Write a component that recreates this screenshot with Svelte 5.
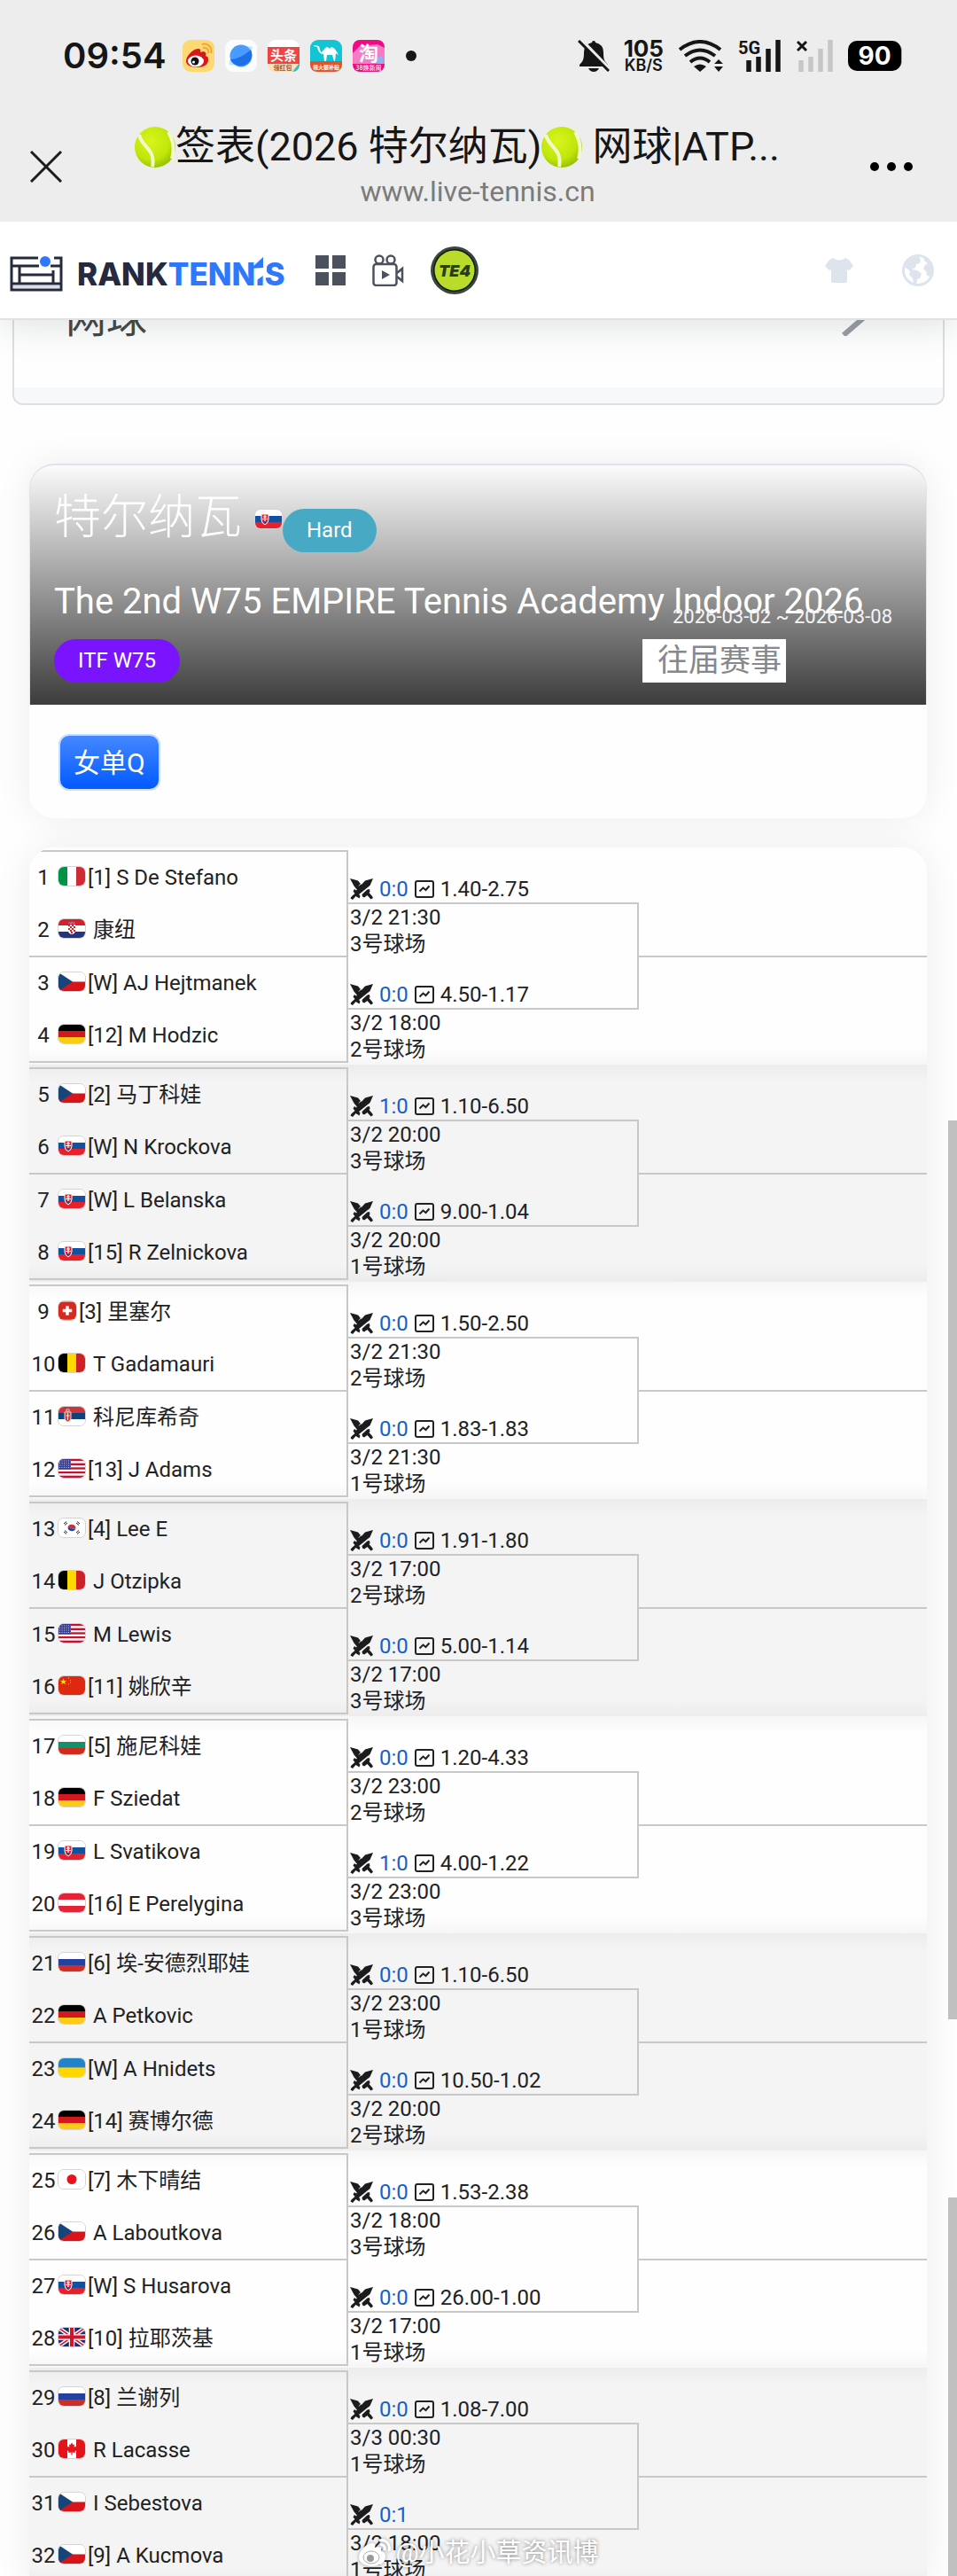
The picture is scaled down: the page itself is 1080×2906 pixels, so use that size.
<script lang="ts">
  type Player = [flag: string, name: string, seed?: string];
  type Match = {
    players: [Player, Player];
    h2h: string;
    odds?: string;
    time: string;
    court: string;
  };

  const draw: Match[] = [
    { players: [['it', 'S De Stefano', '1'], ['hr', '康纽']], h2h: '0:0', odds: '1.40-2.75', time: '3/2 21:30', court: '3号球场' },
    { players: [['cz', 'AJ Hejtmanek', 'W'], ['de', 'M Hodzic', '12']], h2h: '0:0', odds: '4.50-1.17', time: '3/2 18:00', court: '2号球场' },
    { players: [['cz', '马丁科娃', '2'], ['sk', 'N Krockova', 'W']], h2h: '1:0', odds: '1.10-6.50', time: '3/2 20:00', court: '3号球场' },
    { players: [['sk', 'L Belanska', 'W'], ['sk', 'R Zelnickova', '15']], h2h: '0:0', odds: '9.00-1.04', time: '3/2 20:00', court: '1号球场' },
    { players: [['ch', '里塞尔', '3'], ['be', 'T Gadamauri']], h2h: '0:0', odds: '1.50-2.50', time: '3/2 21:30', court: '2号球场' },
    { players: [['rs', '科尼库希奇'], ['us', 'J Adams', '13']], h2h: '0:0', odds: '1.83-1.83', time: '3/2 21:30', court: '1号球场' },
    { players: [['kr', 'Lee E', '4'], ['be', 'J Otzipka']], h2h: '0:0', odds: '1.91-1.80', time: '3/2 17:00', court: '2号球场' },
    { players: [['us', 'M Lewis'], ['cn', '姚欣辛', '11']], h2h: '0:0', odds: '5.00-1.14', time: '3/2 17:00', court: '3号球场' },
    { players: [['bg', '施尼科娃', '5'], ['de', 'F Sziedat']], h2h: '0:0', odds: '1.20-4.33', time: '3/2 23:00', court: '2号球场' },
    { players: [['sk', 'L Svatikova'], ['at', 'E Perelygina', '16']], h2h: '1:0', odds: '4.00-1.22', time: '3/2 23:00', court: '3号球场' },
    { players: [['ru', '埃-安德烈耶娃', '6'], ['de', 'A Petkovic']], h2h: '0:0', odds: '1.10-6.50', time: '3/2 23:00', court: '1号球场' },
    { players: [['ua', 'A Hnidets', 'W'], ['de', '赛博尔德', '14']], h2h: '0:0', odds: '10.50-1.02', time: '3/2 20:00', court: '2号球场' },
    { players: [['jp', '木下晴结', '7'], ['cz', 'A Laboutkova']], h2h: '0:0', odds: '1.53-2.38', time: '3/2 18:00', court: '3号球场' },
    { players: [['sk', 'S Husarova', 'W'], ['gb', '拉耶茨基', '10']], h2h: '0:0', odds: '26.00-1.00', time: '3/2 17:00', court: '1号球场' },
    { players: [['ru', '兰谢列', '8'], ['ca', 'R Lacasse']], h2h: '0:0', odds: '1.08-7.00', time: '3/3 00:30', court: '1号球场' },
    { players: [['cz', 'I Sebestova'], ['cz', 'A Kucmova', '9']], h2h: '0:1', time: '3/2 18:00', court: '1号球场' },
  ];

  // two matches feed one second round slot
  const blocks = Array.from({ length: draw.length / 2 }, (_, i) => draw.slice(i * 2, i * 2 + 2));

  const hStripes: Record<string, string[]> = {
    hr: ['#d3202c', '#fff', '#23357e'],
    cz: ['#fff', '#d7141a'],
    de: ['#000', '#d4181c', '#fccb16'],
    sk: ['#fff', '#12519f', '#e8202c'],
    rs: ['#c6363c', '#12407a', '#fff'],
    bg: ['#fff', '#12926c', '#cf2b1f'],
    at: ['#e52336', '#fff', '#e52336'],
    ru: ['#fff', '#2341a0', '#cf2e26'],
    ua: ['#2382c8', '#ffd600'],
    ch: ['#d52b1e'],
    cn: ['#de2910'],
    jp: ['#fff'],
    kr: ['#fff'],
    gb: ['#1f2d6e'],
    us: ['#c8102e', '#fff', '#c8102e', '#fff', '#c8102e', '#fff', '#c8102e', '#fff', '#c8102e'],
  };
  const vStripes: Record<string, string[]> = {
    it: ['#009246', '#fff', '#ce2b37'],
    be: ['#000', '#fdd900', '#cf2027'],
    ca: ['#e3151b', '#fff', '#e3151b'],
  };
</script>

{#snippet ball()}
  <svg class="ball" viewBox="0 0 46 46" role="img" aria-label="tennis ball">
    <defs>
      <radialGradient id="ball-fill" cx="40%" cy="35%" r="65%">
        <stop offset="0" stop-color="#d8f51c" />
        <stop offset="0.7" stop-color="#c0e60a" />
        <stop offset="1" stop-color="#9cc400" />
      </radialGradient>
    </defs>
    <circle cx="23" cy="23" r="23" fill="url(#ball-fill)" />
    <path d="M5 9c3 14 19 16 15 36M38 6c6 10 7 20 4 30" fill="none" stroke="#f2f8cc" stroke-width="4" />
  </svg>
{/snippet}

{#snippet flag(code: string)}
  <svg class="flag" class:square={code === 'ch'} viewBox={code === 'ch' ? '0 0 21 21' : '0 0 30 21'} aria-hidden="true">
    {#if hStripes[code]}
      {@const rows = hStripes[code]}
      {#each rows as color, i}
        <rect y={(i * 21) / rows.length} width="30" height={21 / rows.length + 0.3} fill={color} />
      {/each}
    {:else}
      {#each vStripes[code] as color, i}
        <rect x={i * 10} width="10.3" height="21" fill={color} />
      {/each}
    {/if}
    {#if code === 'cz'}
      <path d="M0 0l16 10.5L0 21z" fill="#17457a" />
    {:else if code === 'sk'}
      <path d="M7 5h8v6q0 4-4 6-4-2-4-6z" fill="#e0202c" stroke="#fff" />
      <path d="M11 6v7M9 8h4M8 10.500h6" stroke="#fff" stroke-width="1.200" />
      <path d="M9 14q2-2 4 0l-2 2z" fill="#12519f" />
    {:else if code === 'hr'}
      <path d="M11 6h8v7q0 3-4 4-4-1-4-4z" fill="#fff" />
      <path d="M11 6h2v2h-2zM15 6h2v2h-2zM13 8h2v2h-2zM17 8h2v2h-2zM11 10h2v2h-2zM15 10h2v2h-2zM13 12h2v2h-2zM17 12h2v2h-2zM14 14h2v2h-2z" fill="#d3202c" />
      <path d="M11 5l1-2 2 1 1-2 1 2 2-1 1 2z" fill="#6c8fc4" />
    {:else if code === 'rs'}
      <path d="M7 6h7v7q0 3-3.500 4Q7 16 7 13z" fill="#d33c3f" stroke="#f1dcd4" />
      <path d="M10.500 7v8M8.500 10h4M9 3h3v2H9z" stroke="#f3e2cc" />
    {:else if code === 'us'}
      <rect width="14" height="11.500" fill="#3a3f93" />
      <path d="M1 2h13M1 4.500h13M1 7h13M1 9.500h13" stroke="#c9cbe6" stroke-dasharray="1 1.500" />
    {:else if code === 'ch'}
      <path d="M10.500 5v11M5 10.500h11" stroke="#fff" stroke-width="3.600" />
    {:else if code === 'cn'}
      <path d="M5.500 2.500l1 2.500h2.500l-2 1.600.8 2.600-2.300-1.600-2.300 1.600.8-2.600-2-1.600h2.500z" fill="#ffde00" />
      <path d="M11 2h1M13 4.500h1M13 7h1M11 9h1" stroke="#ffde00" />
    {:else if code === 'jp'}
      <circle cx="15" cy="10.500" r="5.500" fill="#e8141c" />
    {:else if code === 'kr'}
      <path d="M10.500 10a4.600 4.600 0 0 1 9 1q-2.300 1.500-4.500 0t-4.500-1z" fill="#cd2e3a" />
      <path d="M10.500 10a4.600 4.600 0 0 0 9 1q-2.300 1.500-4.500 0t-4.500-1z" fill="#1f4aa0" />
      <path d="M6 6l3-2.500M7 7.500L10 5M21 3.500L24 6M20 5l3 2.500M6 15l3 2.500M7 13.500L10 16M21 17.500l3-2.500M20 16l3-2.500" stroke="#222" />
    {:else if code === 'gb'}
      <path d="M0 0l30 21M30 0L0 21" stroke="#fff" stroke-width="4.500" />
      <path d="M0 0l30 21M30 0L0 21" stroke="#d0142c" stroke-width="1.500" />
      <path d="M15 0v21M0 10.500h30" stroke="#fff" stroke-width="6.500" />
      <path d="M15 0v21M0 10.500h30" stroke="#d0142c" stroke-width="4" />
    {:else if code === 'ca'}
      <path d="M15 3.500l1.500 2.500 1.500-.6-.4 3.600 1.600-1.600.5 1 1.800-.3-.8 2.200 1 .7-3.200 2.500.3 1.400-3.200-.4v3h-1.200v-3l-3.200.4.3-1.400-3.200-2.500 1-.7-.8-2.200 1.800.3.500-1L12.400 9 12 5.400l1.500.6z" fill="#e3151b" />
    {/if}
  </svg>
{/snippet}

{#snippet score(match: Match)}
  <div class="score">
    <svg class="swords" viewBox="0 0 26 24" aria-hidden="true">
      <path d="M0 0l9 2.500 7.500 9-5.500 5L4.500 8.500z" fill="#1c1c1e" />
      <path d="M26 0l-9 2.500L7 13.500 5 12l-1.500 2.500 2 2.500-4 3.500-1 2 2.500 1.500 3.500-4 4 2.500 1-3-1.500-1.500L22.500 8z" fill="#1c1c1e" />
      <path d="M13.500 18l6-5.500 2.500-.5.500 3-1 1 3.500 4 1 2-2.500 1.500-4-4.500-3.500 2.500-2-1z" fill="#1c1c1e" />
      <path d="M12.500 18.500L20 10.500M10 8.500l2.500-3" stroke="#e8e8e8" stroke-width="0.900" />
    </svg>
    <a href="#h2h">{match.h2h}</a>
    {#if match.odds}
      <svg class="chart" viewBox="0 0 22 20" aria-hidden="true">
        <rect x="1" y="1" width="20" height="18" rx="2" fill="none" stroke="#222" stroke-width="2" />
        <path d="M5.500 12.500l4-4 3 2.500 4-4.500" fill="none" stroke="#222" stroke-width="2" />
      </svg>
      <span>{match.odds}</span>
    {/if}
  </div>
{/snippet}

{#snippet schedule(match: Match)}
  <div class="schedule">{match.time}<br />{match.court}</div>
{/snippet}

<div class="screen">
  <header class="top">
    <div class="status">
      <span class="clock">09:54</span>
      <div class="apps">
        <svg viewBox="0 0 36 36" aria-hidden="true">
          <rect width="36" height="36" rx="9" fill="#fdd873" />
          <path d="M4 24c0-6 8-14 14-14 2 0 3 2 2 4 4-2 8 0 6 4 3 1 3 2 3 5 0 5-6 8-12 8S4 29 4 24z" fill="#d9161d" />
          <ellipse cx="15" cy="24" rx="9" ry="6.500" fill="#fff" />
          <circle cx="14" cy="24" r="4.500" fill="#111" />
          <circle cx="12.500" cy="25" r="1.500" fill="#fff" />
          <path d="M23 9c4-1 7 2 6 6M22 5c7-2 12 4 10 10" fill="none" stroke="#f2a534" stroke-width="2" />
        </svg>
        <svg viewBox="0 0 36 36" aria-hidden="true">
          <rect width="36" height="36" rx="9" fill="#fbfcfd" />
          <path d="M5 28C2 20 22 4 31 8c-2 9-16 23-26 20z" fill="#bfe0ff" />
          <circle cx="18" cy="18" r="12.500" fill="#4a9bff" />
          <path d="M6 22C14 22 24 16 29 11a12.500 12.500 0 0 1-23 11z" fill="#1f6fe8" />
        </svg>
        <svg viewBox="0 0 36 36" aria-hidden="true">
          <rect width="36" height="36" rx="9" fill="#fff" />
          <rect y="8" width="36" height="19" fill="#ee4444" />
          <path d="M0 27h36q0 9-9 9H9q-9 0-9-9z" fill="#fbe0b4" />
          <path d="M36 26v3q-1 7-8 7z" fill="#39b9c4" />
          <text x="18" y="23" class="icon-cjk" font-size="15" fill="#fff">头条</text>
          <text x="17" y="34" class="icon-cjk" font-size="7" fill="#a0522d">领红包</text>
        </svg>
        <svg viewBox="0 0 36 36" aria-hidden="true">
          <rect width="36" height="36" rx="9" fill="#12c4d4" />
          <path d="M0 24h36v3q0 9-9 9H9q-9 0-9-9z" fill="#e8502a" />
          <path d="M4 6l6 1 2 7c3-1 4-5 7-6 3 1 3 3 5 0 4 1 6 5 8 9l-3-2-1 9h-1l-2-7h-6l-1 7h-2l-1-8c-4 0-6-3-7-8l-4-1z" fill="#fff" />
          <text x="18" y="33" class="icon-cjk" font-size="6" fill="#fff">领大额补贴</text>
        </svg>
        <svg viewBox="0 0 36 36" aria-hidden="true">
          <rect width="36" height="36" rx="9" fill="#f57cc4" />
          <path d="M0 9q0-9 9-9h18q9 0 9 9l-8-4-20 2-8 8z" fill="#ef0a86" />
          <path d="M0 27h36q0 9-9 9H9q-9 0-9-9z" fill="#e0107c" />
          <circle cx="31" cy="23" r="4" fill="#8ab4f0" />
          <text x="18" y="23" class="icon-cjk" font-size="22" fill="#fff">淘</text>
          <text x="18" y="34" class="icon-cjk" font-size="7" fill="#ffd0e8">38焕新周</text>
        </svg>
      </div>
      <span class="more-dot"></span>
      <div class="signals">
        <svg class="bell" viewBox="0 0 36 36" aria-hidden="true">
          <path d="M18 1q2 0 2 2 9 2 9 11c0 8 1 10 5 14v2H2v-2c4-4 5-6 5-14Q7 5 16 3q0-2 2-2z" fill="#161616" />
          <path d="M12 32h12q-2 4-6 4t-6-4z" fill="#161616" />
          <path d="M4 0l32 33" stroke="#ededed" stroke-width="4" />
          <path d="M1 1l34 34" stroke="#161616" stroke-width="3" />
        </svg>
        <div class="speed"><b>105</b><span>KB/S</span></div>
        <svg class="wifi" viewBox="0 0 52 36" aria-hidden="true">
          <path d="M2 11q23-18 46 0M8 18q17-13 34 0M14 25q11-9 22 0" fill="none" stroke="#161616" stroke-width="4" />
          <path d="M18 30q7-5 14 0l-7 6z" fill="#161616" />
          <path d="M41 27l5-5 5 5zM41 30h10l-5 6z" fill="#161616" />
        </svg>
        <svg class="bars" viewBox="0 0 50 36" aria-hidden="true">
          <text x="0" y="16" class="icon-latin" font-size="20" fill="#161616">5G</text>
          <path d="M12 23v13M23 19v17M34 10v26M45 0v36" stroke="#161616" stroke-width="5.500" />
        </svg>
        <svg class="bars small" viewBox="0 0 42 36" aria-hidden="true">
          <path d="M1 2l10 10M11 2L1 12" stroke="#161616" stroke-width="3" />
          <path d="M5 23v13M16 19v17M27 10v26M38 0v36" stroke="#c6c6c6" stroke-width="5.500" />
        </svg>
        <span class="battery">90</span>
      </div>
    </div>

    <div class="titlebar">
      <button class="icon-btn" aria-label="Close">
        <svg width="36" height="36" viewBox="0 0 36 36" aria-hidden="true">
          <path d="M1 1l34 34M35 1L1 35" stroke="#1c1c1c" stroke-width="3" />
        </svg>
      </button>
      <div class="titles">
        <h1>{@render ball()}签表(2026 特尔纳瓦){@render ball()} 网球|ATP...</h1>
        <p>www.live-tennis.cn</p>
      </div>
      <button class="icon-btn" aria-label="More">
        <svg width="48" height="36" viewBox="0 0 48 36" aria-hidden="true">
          <circle cx="5" cy="18" r="5" /><circle cx="24" cy="18" r="5" /><circle cx="43" cy="18" r="5" />
        </svg>
      </button>
    </div>
  </header>

  <nav class="nav">
    <a class="brand" href="#home">
      <svg width="60" height="40" viewBox="0 0 60 40" aria-hidden="true">
        <g fill="none" stroke="#262a3f" stroke-width="3">
          <path d="M32 2H2v36h56V2h-8M2 11h31M11 11v20M49 16v15M11 21h38M2 31h56M46 11h12" />
        </g>
        <path d="M4 34.500h52" stroke="#dcdfe6" stroke-width="3" />
        <circle cx="40" cy="6" r="6" fill="#2f78fb" />
      </svg>
      <span class="wordmark">RANK<em>TENN<span class="net">I<svg viewBox="0 0 18 40" aria-hidden="true"><path d="M4 5h14v13L4 28z" fill="#fff" /><path d="M0 13L14 0v12z" fill="#2f78fb" /></svg></span>S</em></span>
    </a>
    <a class="nav-grid" href="#menu" aria-label="Menu">
      <svg width="34" height="34" viewBox="0 0 34 34" aria-hidden="true">
        <path d="M0 0h15v15H0zM19 0h15v15H19zM0 19h15v15H0zM19 19h15v15H19z" fill="#4b525d" />
      </svg>
    </a>
    <a class="nav-video" href="#video" aria-label="Video">
      <svg width="36" height="36" viewBox="0 0 36 36" aria-hidden="true">
        <g fill="none" stroke="#4b525d" stroke-width="2.500">
          <circle cx="8" cy="6" r="4.500" />
          <circle cx="21" cy="6" r="4.500" />
          <rect x="1.500" y="11" width="26" height="24" rx="3" />
          <path d="M28 21l6-5v14l-6-5" />
        </g>
        <path d="M11 18l9 5-9 5z" fill="#4b525d" />
      </svg>
    </a>
    <a class="nav-te4" href="#te4" aria-label="TE4">
      <svg width="54" height="54" viewBox="0 0 54 54" aria-hidden="true">
        <circle cx="27" cy="27" r="27" fill="#39473e" />
        <circle cx="27" cy="27" r="24" fill="#111a10" />
        <circle cx="27" cy="27" r="22.500" fill="#b9dc2c" />
        <text x="27" y="34" class="icon-te4">TE4</text>
      </svg>
    </a>
    <a class="nav-shirt" href="#theme" aria-label="Theme">
      <svg width="32" height="28" viewBox="0 0 32 28" aria-hidden="true">
        <path d="M9 0q7 5 14 0l4 2 5 7-5 5-2-1v13q0 2-2 2H9q-2 0-2-2V13l-2 1-5-5 5-7z" fill="#dde4ec" />
      </svg>
    </a>
    <a class="nav-globe" href="#lang" aria-label="Language">
      <svg width="36" height="36" viewBox="0 0 36 36" aria-hidden="true">
        <circle cx="18" cy="18" r="16.500" fill="#fff" stroke="#dde4ec" stroke-width="3" />
        <path d="M4 9Q9 2 18 2l3 4-1 4-4 1-1 4-4 2 6 1 5 4-2 5-3 1-1 6-3-1-1-6-4-4 1-4-5-4-2-3z" fill="#dde4ec" />
        <path d="M25 4q8 5 9 13l-2 8-4-1-1-5-3-3 2-4 3-2-4-3z" fill="#dde4ec" />
      </svg>
    </a>
  </nav>

  <main>
    <section class="category">
      <div class="category-row">
        <span>网球</span>
        <svg width="28" height="40" viewBox="0 0 28 40" aria-hidden="true">
          <path d="M2 1l22 19L2 39" fill="none" stroke="#989da3" stroke-width="6" />
        </svg>
      </div>
      <div class="category-foot"></div>
    </section>

    <section class="event">
      <div class="banner">
        <div class="place">
          <h2>特尔纳瓦</h2>
          <span class="drop">{@render flag('sk')}</span>
          <span class="pill hard drop">Hard</span>
        </div>
        <p class="event-name">The 2nd W75 EMPIRE Tennis Academy Indoor 2026</p>
        <div class="level">
          <span class="pill itf">ITF W75</span>
          <button class="past">往届赛事</button>
        </div>
        <span class="dates">2026-03-02 ~ 2026-03-08</span>
      </div>
      <div class="tabs">
        <button class="tab">女单Q</button>
      </div>
    </section>

    <section class="draw">
      {#each blocks as [first, second], b}
        <div class="block">
          <div class="round players">
            {#each [first, second] as match, m}
              <div class="match">
                {#each match.players as [code, name, seed], p}
                  <div class="player">
                    <span class="pos">{b * 4 + m * 2 + p + 1}</span>
                    {@render flag(code)}
                    <span class="name" class:unseeded={!seed}>{seed ? `[${seed}] ` : ''}{name}</span>
                  </div>
                {/each}
              </div>
            {/each}
          </div>
          <div class="round">
            {@render score(first)}
            <div class="bracket">
              {@render schedule(first)}
              {@render score(second)}
            </div>
            {@render schedule(second)}
          </div>
          <div class="round"><div class="line"></div></div>
        </div>
      {/each}
    </section>
  </main>

  <div class="thumb upper"></div>
  <div class="thumb lower"></div>

  <div class="watermark">
    <svg width="38" height="32" viewBox="0 0 38 32" aria-hidden="true">
      <path d="M1 21C1 13 10 5 16 5c3 0 4 2 3 5 5-2 9 0 7 4 4 1 5 3 5 6 0 7-7 11-15 11S1 27 1 21z" fill="#fff" />
      <ellipse cx="15" cy="21" rx="9" ry="7" fill="none" stroke="#aaa" />
      <circle cx="14" cy="22" r="4" fill="#999" />
      <path d="M25 7c4-1 6 2 5 6M24 2c8-2 13 5 11 12" fill="none" stroke="#fff" stroke-width="3" />
    </svg>
    <span>@小花小草资讯博</span>
  </div>
</div>

<style>
  :global(body) {
    background: #fefefe;
  }

  .screen {
    position: relative;
    height: 100vh;
    overflow: hidden;
    font-family: Roboto, 'Noto Sans CJK SC', sans-serif;
    font-size: 24px;
    line-height: 30px;
    color: #212224;
  }

  h1,
  h2,
  p {
    margin: 0;
    font-weight: 400;
  }

  a {
    color: inherit;
    text-decoration: none;
  }

  svg {
    display: block;
    flex: none;
  }

  button {
    font-family: inherit;
    cursor: pointer;
  }

  .top {
    position: relative;
    z-index: 3;
    background: #ededed;
  }

  .status {
    display: flex;
    align-items: center;
    height: 126px;
    padding: 0 63px 0 71px;
  }

  .clock {
    font-family: Inter, sans-serif;
    font-size: 40px;
    font-weight: 600;
    color: #161616;
  }

  .apps {
    display: flex;
    gap: 12px;
    margin-left: 18px;
  }

  .apps svg {
    width: 36px;
    height: 36px;
  }

  .icon-cjk {
    font-family: 'Noto Sans CJK SC', sans-serif;
    font-weight: 700;
    text-anchor: middle;
  }

  .icon-latin {
    font-family: Roboto, sans-serif;
    font-weight: 700;
  }

  .icon-te4 {
    font-family: Inter, sans-serif;
    font-size: 18px;
    font-weight: 900;
    font-style: italic;
    text-anchor: middle;
    fill: #2b3b20;
  }

  .more-dot {
    width: 12px;
    height: 12px;
    margin-left: 24px;
    border-radius: 50%;
    background: #161616;
  }

  .signals {
    display: flex;
    align-items: center;
    gap: 16px;
    margin-left: auto;
  }

  .bell {
    width: 36px;
    height: 36px;
  }

  .speed {
    display: flex;
    flex-direction: column;
    align-items: center;
    font-family: Inter, sans-serif;
    font-size: 18px;
    font-weight: 600;
    line-height: 16px;
    color: #161616;
  }

  .speed b {
    font-size: 26px;
    font-weight: 700;
    line-height: 22px;
  }

  .wifi {
    width: 52px;
    height: 36px;
  }

  .bars {
    width: 50px;
    height: 36px;
  }

  .bars.small {
    width: 42px;
  }

  .battery {
    width: 60px;
    border-radius: 10px;
    background: #000;
    box-shadow: 6px 0 0 -5px #aaa;
    font-family: Inter, sans-serif;
    font-size: 28px;
    font-weight: 700;
    line-height: 34px;
    text-align: center;
    color: #fff;
  }

  .titlebar {
    display: flex;
    align-items: center;
    height: 124px;
    padding: 0 50px 0 34px;
  }

  .titles {
    flex: 1;
    margin: 0 56px 0 82px;
    text-align: center;
  }

  .titles h1 {
    display: flex;
    align-items: center;
    font-size: 45px;
    line-height: 56px;
    white-space: pre;
    color: #161616;
  }

  .titles p {
    font-size: 32px;
    line-height: 44px;
    color: #7b7b7b;
  }

  .ball {
    width: 46px;
    height: 46px;
  }

  .icon-btn {
    padding: 0;
    border: 0;
    background: none;
  }

  .nav {
    position: relative;
    z-index: 2;
    display: flex;
    align-items: center;
    height: 111px;
    padding: 0 26px 0 11px;
    border-bottom: 2px solid #dfe3e8;
    background: #fff;
    box-shadow: 0 4px 44px rgba(40, 60, 60, 0.16);
    box-sizing: border-box;
  }

  .brand {
    display: flex;
    align-items: center;
    gap: 16px;
    padding-top: 8px;
  }

  .wordmark {
    font-family: Inter, sans-serif;
    font-size: 35px;
    font-weight: 800;
    line-height: 40px;
    color: #262a3f;
  }

  .wordmark em {
    font-style: normal;
    color: #2f78fb;
  }

  .net {
    position: relative;
  }

  .net svg {
    position: absolute;
    left: -5px;
    bottom: 0;
    width: 18px;
    height: 40px;
  }

  .nav-grid {
    margin-left: 34px;
  }

  .nav-video,
  .nav-te4 {
    margin-left: 30px;
  }

  .nav-shirt {
    margin-left: auto;
  }

  .nav-globe {
    margin-left: 55px;
  }

  .category {
    margin: 0 14px;
    border: 2px solid #dcdfe3;
    border-top: 0;
    border-radius: 0 0 12px 12px;
    overflow: hidden;
  }

  .category-row {
    display: flex;
    justify-content: space-between;
    align-items: center;
    height: 76px;
    padding: 0 86px 0 58px;
    box-sizing: border-box;
    font-size: 46px;
    color: #44474a;
  }

  .category-row > * {
    margin-top: -80px;
  }

  .category-foot {
    height: 18px;
    background: #f7f8fa;
  }

  .event {
    margin: 66px 34px 0 33px;
    border-radius: 28px;
    background: #fefefe;
    box-shadow: 0 0 40px rgba(0, 0, 0, 0.07);
  }

  .banner {
    position: relative;
    padding: 29px 27px 25px;
    border: 2px solid #dfe4ec;
    border-width: 2px 1px 0;
    border-radius: 28px 28px 0 0;
    background: linear-gradient(#fdfdfd, #3c3c3c);
    background-origin: border-box;
  }

  .place {
    display: flex;
    align-items: flex-start;
  }

  .place h2 {
    margin-right: 14px;
    font-size: 53px;
    font-weight: 300;
    line-height: 60px;
    color: #fff;
  }

  .drop {
    margin-top: 20px;
  }

  .pill {
    padding: 0 27px;
    border-radius: 25px;
    font-size: 24px;
    line-height: 49px;
    color: #fff;
  }

  .hard {
    background: #47a9c4;
  }

  .itf {
    background: #7a14ff;
  }

  .event-name {
    margin-top: 31px;
    font-size: 40px;
    line-height: 50px;
    white-space: nowrap;
    color: #fff;
  }

  .level {
    display: flex;
    justify-content: space-between;
    margin: 17px 131px 0 0;
  }

  .past {
    height: 49px;
    padding: 0 5px 0 17px;
    border: 0;
    background: #fff;
    font-size: 35px;
    line-height: 44px;
    color: #86888b;
  }

  .dates {
    position: absolute;
    right: 38px;
    bottom: 84px;
    font-size: 22px;
    color: #f4f4f4;
  }

  .tabs {
    padding: 33px 33px 31px;
  }

  .tab {
    height: 64px;
    padding: 0 15px 4px;
    border: 2px solid #c9defa;
    border-radius: 12px;
    background: linear-gradient(#4588ff, #0259ff);
    font-size: 30px;
    color: #fff;
  }

  .draw {
    margin: 33px 34px 0 33px;
    border-radius: 28px 28px 0 0;
    box-shadow: 0 0 40px rgba(0, 0, 0, 0.07);
    overflow: hidden;
  }

  .block {
    display: grid;
    grid-template-columns: 360fr 328fr 325fr;
    padding: 3px 0 2px;
    background: linear-gradient(rgba(0, 0, 0, 0.03), transparent 20px calc(100% - 20px), rgba(0, 0, 0, 0.03)) #fefefe;
  }

  .block:first-child {
    background: linear-gradient(transparent calc(100% - 20px), rgba(0, 0, 0, 0.03)) #fefefe;
  }

  .block:nth-child(even) {
    background-color: #f4f4f4;
  }

  .players {
    border-right: 2px solid #c8c8c8;
    border-bottom: 2px solid #c8c8c8;
  }

  .match {
    display: flex;
    flex-direction: column;
    height: 119px;
    border-top: 2px solid #c8c8c8;
    box-sizing: border-box;
  }

  .player {
    display: flex;
    flex: 1;
    align-items: center;
  }

  .pos {
    width: 32px;
    text-align: center;
  }

  .flag {
    width: 30px;
    height: 21px;
    margin-bottom: 3px;
    border: 1px solid #d4d4d4;
    border-radius: 7px;
  }

  .square {
    width: 20px;
  }

  .name {
    margin-left: 2px;
  }

  .unseeded {
    margin-left: 8px;
  }

  .score {
    display: flex;
    align-items: center;
    gap: 7px;
    padding-left: 2px;
  }

  .score a {
    color: #1660cc;
  }

  .round > .score {
    padding-top: 29px;
  }

  .swords {
    width: 26px;
    height: 24px;
  }

  .chart {
    width: 22px;
    height: 20px;
  }

  .schedule {
    padding-left: 2px;
  }

  .bracket {
    display: flex;
    flex-direction: column;
    justify-content: space-between;
    height: 121px;
    border: 2px solid #c8c8c8;
    border-left: 0;
    box-sizing: border-box;
  }

  .line {
    height: 119px;
    border-bottom: 2px solid #c8c8c8;
  }

  .thumb {
    position: absolute;
    right: 0;
    width: 10px;
    background: #c0c0c0;
  }

  .upper {
    top: 43.5%;
    bottom: 21.6%;
  }

  .lower {
    top: 85.3%;
    bottom: 0;
  }

  .watermark {
    position: absolute;
    right: 0;
    bottom: 10px;
    left: 0;
    display: flex;
    justify-content: center;
    align-items: center;
    gap: 4px;
    font-size: 29px;
    color: #fff;
    text-shadow: 0 0 4px rgba(0, 0, 0, 0.5);
  }

  .watermark svg {
    filter: drop-shadow(0 0 2px rgba(0, 0, 0, 0.35));
  }
</style>
